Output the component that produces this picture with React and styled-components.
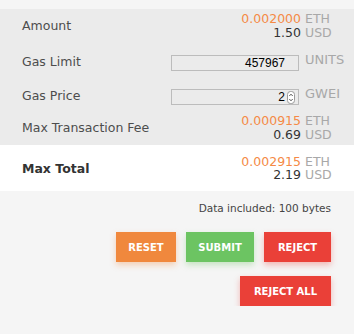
import React from "react";
import styled, { createGlobalStyle } from "styled-components";

const GlobalStyle = createGlobalStyle`
  html, body {
    margin: 0;
    padding: 0;
    background: #f5f5f5;
    font-family: "DejaVu Sans", "Open Sans", sans-serif;
  }
`;

const Page = styled.div`
  width: 354px;
  padding-top: 9px;
`;

const Section = styled.div`
  background: ${(props) => props.bg};
`;

const Row = styled.div`
  display: grid;
  grid-template-columns: 1fr auto 34px;
  align-items: center;
  height: ${(props) => props.h}px;
  padding: 0 19px 0 22px;
`;

const Label = styled.div`
  font-size: 12.5px;
  color: ${(props) => (props.bold ? "#333" : "#4d4d4d")};
  font-weight: ${(props) => (props.bold ? "bold" : "normal")};
`;

const Values = styled.div`
  display: grid;
  grid-template-columns: auto 34px;
  grid-column: 2 / 4;
  font-size: 12.5px;
  line-height: 13.5px;
`;

const Num = styled.span`
  text-align: right;
  color: ${(props) => (props.accent ? "#f58a46" : "#333")};
`;

const Unit = styled.span`
  color: #a8a8a8;
  padding-left: 4px;
  white-space: nowrap;
`;

const FieldUnit = styled(Unit)`
  font-size: 13px;
  position: relative;
  top: -2px;
`;

const InputBox = styled.div`
  display: flex;
  align-items: center;
  box-sizing: border-box;
  width: 128px;
  height: 16px;
  margin-right: 2px;
  border: 1px solid #bcbcbc;
  position: relative;
  top: 2px;
`;

const Field = styled.input`
  flex: 1;
  min-width: 0;
  border: none;
  outline: none;
  background: transparent;
  text-align: right;
  font-family: "Liberation Sans", Arial, sans-serif;
  font-size: 12px;
  color: #000;
  padding: 0 ${(props) => (props.spin ? 2 : 13)}px 0 0;
  height: 14px;
`;

const Spinner = styled.svg`
  width: 8px;
  height: 13px;
  margin-right: 3px;
  flex: none;
`;

const Note = styled.div`
  text-align: right;
  font-size: 10.5px;
  color: #444;
  padding: 11px 23px 0 0;
`;

const Buttons = styled.div`
  display: flex;
  justify-content: flex-end;
  gap: 10px;
  padding: 0 23px 0 0;
  margin-top: ${(props) => props.top}px;
`;

const colors = {
  orange: ["#f0883d", "240, 136, 61"],
  green: ["#6cc462", "108, 196, 98"],
  red: ["#ea4038", "234, 64, 56"],
};

const Button = styled.button`
  width: ${(props) => props.w}px;
  height: 30px;
  border: none;
  padding: 0;
  background: ${(props) => colors[props.kind][0]};
  color: #fff;
  font-family: "DejaVu Sans", sans-serif;
  font-weight: bold;
  font-size: 10px;
  text-transform: uppercase;
  box-shadow: 0 3px 6px rgba(${(props) => colors[props.kind][1]}, 0.35);
  cursor: pointer;
`;

const Amount = ({ eth, usd }) => (
  <Values>
    <Num accent>{eth}</Num>
    <Unit>ETH</Unit>
    <Num>{usd}</Num>
    <Unit>USD</Unit>
  </Values>
);

export default function App() {
  return (
    <Page>
      <GlobalStyle />
      <Section bg="#ebebeb">
        <Row h={33}>
          <Label>Amount</Label>
          <Amount eth="0.002000" usd="1.50" />
        </Row>
        <Row h={38}>
          <Label>Gas Limit</Label>
          <InputBox>
            <Field defaultValue="457967" />
          </InputBox>
          <FieldUnit>UNITS</FieldUnit>
        </Row>
        <Row h={30}>
          <Label>Gas Price</Label>
          <InputBox>
            <Field defaultValue="2" spin />
            <Spinner viewBox="0 0 8 13">
              <rect x="0.5" y="0.5" width="7" height="12" rx="3" fill="#fff" stroke="#9a9a9a" />
              <path d="M2.3 5 L4 3.2 L5.7 5" fill="none" stroke="#444" strokeWidth="0.9" />
              <path d="M2.3 8 L4 9.8 L5.7 8" fill="none" stroke="#444" strokeWidth="0.9" />
            </Spinner>
          </InputBox>
          <FieldUnit>GWEI</FieldUnit>
        </Row>
        <Row h={35}>
          <Label>Max Transaction Fee</Label>
          <Amount eth="0.000915" usd="0.69" />
        </Row>
      </Section>
      <Section bg="#fff">
        <Row h={46}>
          <Label bold>Max Total</Label>
          <Amount eth="0.002915" usd="2.19" />
        </Row>
      </Section>
      <Note>Data included: 100 bytes</Note>
      <Buttons top={18}>
        <Button kind="orange" w={60}>Reset</Button>
        <Button kind="green" w={68}>Submit</Button>
        <Button kind="red" w={67}>Reject</Button>
      </Buttons>
      <Buttons top={14}>
        <Button kind="red" w={91}>Reject All</Button>
      </Buttons>
    </Page>
  );
}
